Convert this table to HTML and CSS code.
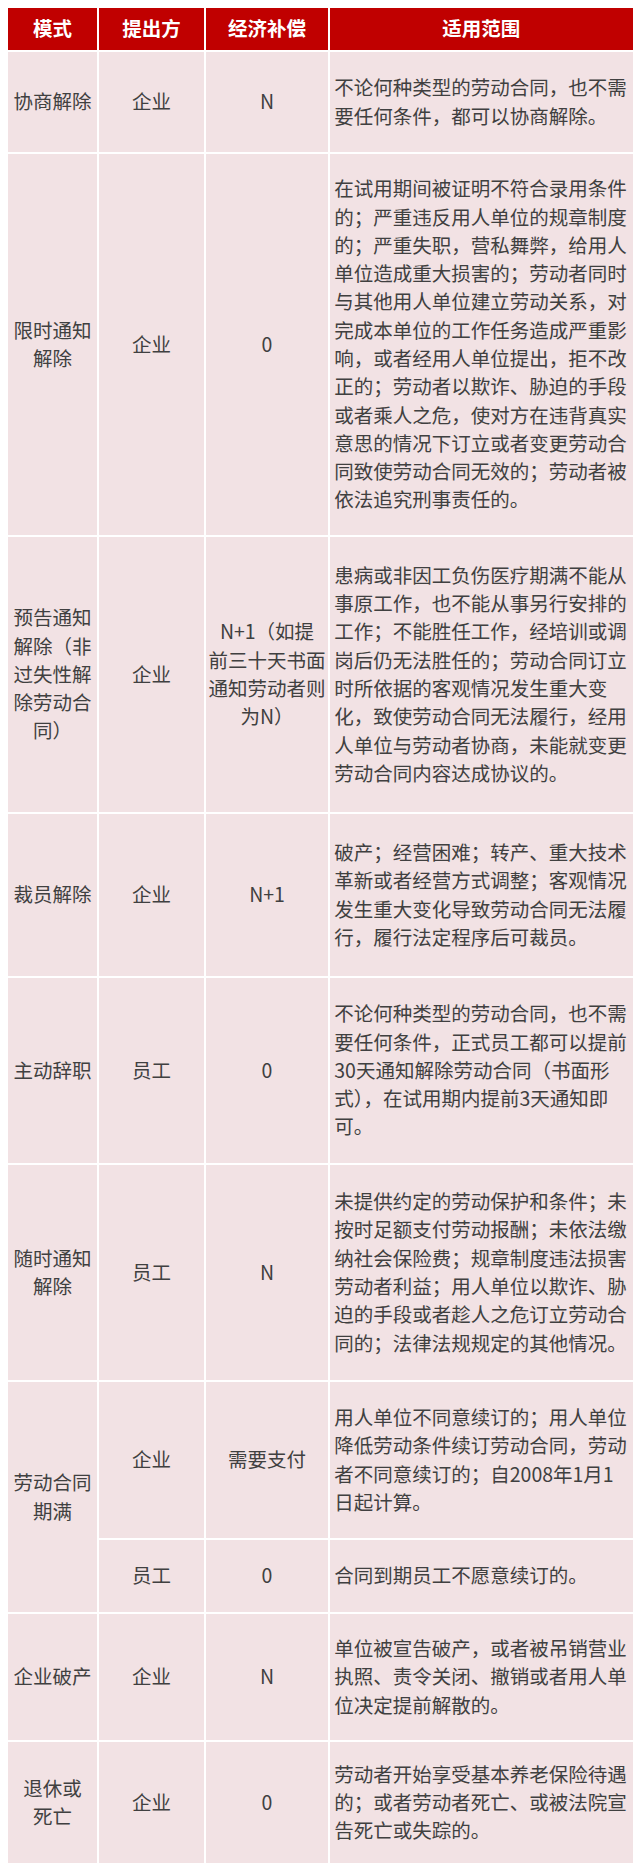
FILE: index.html
```html
<!DOCTYPE html>
<html lang="zh-CN">
<head>
<meta charset="utf-8">
<title>劳动合同解除模式</title>
<link rel="stylesheet" href="styles.css">
</head>
<body>
<table class="tbl">
  <colgroup>
    <col class="c1"><col class="c2"><col class="c3"><col class="c4">
  </colgroup>
  <thead>
    <tr class="h">
      <th>模式</th><th>提出方</th><th>经济补偿</th><th>适用范围</th>
    </tr>
  </thead>
  <tbody>
    <tr class="r1">
      <td>协商解除</td><td>企业</td><td>N</td>
      <td class="d">不论何种类型的劳动合同，也不需<br>要任何条件，都可以协商解除。</td>
    </tr>
    <tr class="r2">
      <td>限时通知<br>解除</td><td>企业</td><td>0</td>
      <td class="d">在试用期间被证明不符合录用条件<br>的；严重违反用人单位的规章制度<br>的；严重失职，营私舞弊，给用人<br>单位造成重大损害的；劳动者同时<br>与其他用人单位建立劳动关系，对<br>完成本单位的工作任务造成严重影<br>响，或者经用人单位提出，拒不改<br>正的；劳动者以欺诈、胁迫的手段<br>或者乘人之危，使对方在违背真实<br>意思的情况下订立或者变更劳动合<br>同致使劳动合同无效的；劳动者被<br>依法追究刑事责任的。</td>
    </tr>
    <tr class="r3">
      <td>预告通知<br>解除（非<br>过失性解<br>除劳动合<br>同）</td><td>企业</td><td>N+1（如提<br>前三十天书面<br>通知劳动者则<br>为N）</td>
      <td class="d">患病或非因工负伤医疗期满不能从<br>事原工作，也不能从事另行安排的<br>工作；不能胜任工作，经培训或调<br>岗后仍无法胜任的；劳动合同订立<br>时所依据的客观情况发生重大变<br>化，致使劳动合同无法履行，经用<br>人单位与劳动者协商，未能就变更<br>劳动合同内容达成协议的。</td>
    </tr>
    <tr class="r4">
      <td>裁员解除</td><td>企业</td><td>N+1</td>
      <td class="d">破产；经营困难；转产、重大技术<br>革新或者经营方式调整；客观情况<br>发生重大变化导致劳动合同无法履<br>行，履行法定程序后可裁员。</td>
    </tr>
    <tr class="r5">
      <td>主动辞职</td><td>员工</td><td>0</td>
      <td class="d">不论何种类型的劳动合同，也不需<br>要任何条件，正式员工都可以提前<br>30天通知解除劳动合同（书面形<br>式），在试用期内提前3天通知即<br>可。</td>
    </tr>
    <tr class="r6">
      <td>随时通知<br>解除</td><td>员工</td><td>N</td>
      <td class="d">未提供约定的劳动保护和条件；未<br>按时足额支付劳动报酬；未依法缴<br>纳社会保险费；规章制度违法损害<br>劳动者利益；用人单位以欺诈、胁<br>迫的手段或者趁人之危订立劳动合<br>同的；法律法规规定的其他情况。</td>
    </tr>
    <tr class="r7a">
      <td rowspan="2">劳动合同<br>期满</td><td>企业</td><td>需要支付</td>
      <td class="d">用人单位不同意续订的；用人单位<br>降低劳动条件续订劳动合同，劳动<br>者不同意续订的；自2008年1月1<br>日起计算。</td>
    </tr>
    <tr class="r7b">
      <td>员工</td><td>0</td>
      <td class="d">合同到期员工不愿意续订的。</td>
    </tr>
    <tr class="r8">
      <td>企业破产</td><td>企业</td><td>N</td>
      <td class="d">单位被宣告破产，或者被吊销营业<br>执照、责令关闭、撤销或者用人单<br>位决定提前解散的。</td>
    </tr>
    <tr class="r9">
      <td>退休或<br>死亡</td><td>企业</td><td>0</td>
      <td class="d">劳动者开始享受基本养老保险待遇<br>的；或者劳动者死亡、或被法院宣<br>告死亡或失踪的。</td>
    </tr>
  </tbody>
</table>
</body>
</html>
```

FILE: styles.css
```css
html, body {
  margin: 0;
  padding: 0;
  background: #ffffff;
}

body {
  font-family: "Noto Sans CJK SC", "Noto Sans", sans-serif;
  color: #404040;
}

.tbl {
  margin: 5.5px 0 0 5.5px;
  border-collapse: separate;
  border-spacing: 2.5px;
  table-layout: fixed;
  width: 629px;
}

.c1 { width: 89.5px; }
.c2 { width: 104px; }
.c3 { width: 122px; }
.c4 { width: 301px; }

.tbl th,
.tbl td {
  padding: 0;
  text-align: center;
  vertical-align: middle;
  font-size: 19.5px;
  line-height: 28.3px;
  white-space: nowrap;
}

.tbl th {
  background: #c00000;
  color: #ffffff;
  font-weight: 700;
}

.tbl td {
  background: #f2e2e4;
  font-weight: 400;
}

.tbl td.d {
  text-align: left;
  padding: 0 2px 0 4px;
}

.h { height: 42px; }
.r1 { height: 100px; }
.r2 { height: 381px; }
.r3 { height: 275px; }
.r4 { height: 162px; }
.r5 { height: 185px; }
.r6 { height: 215px; }
.r7a { height: 156px; }
.r7b { height: 72px; }
.r8 { height: 126px; }
.r9 { height: 121px; }
```
